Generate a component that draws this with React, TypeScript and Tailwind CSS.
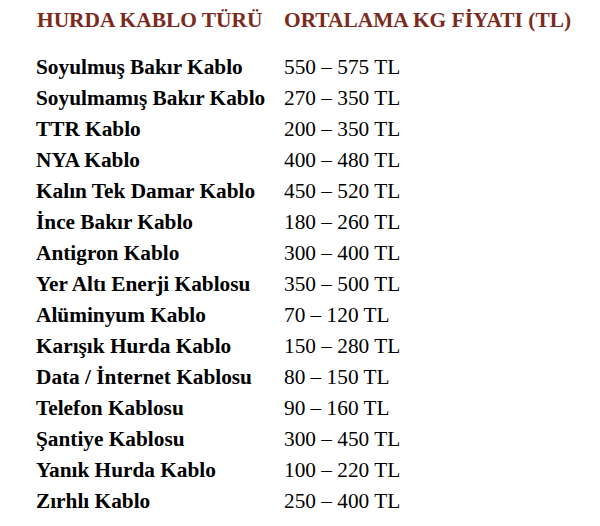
import React from "react";

const rows: [string, string][] = [
  ["Soyulmuş Bakır Kablo", "550 – 575 TL"],
  ["Soyulmamış Bakır Kablo", "270 – 350 TL"],
  ["TTR Kablo", "200 – 350 TL"],
  ["NYA Kablo", "400 – 480 TL"],
  ["Kalın Tek Damar Kablo", "450 – 520 TL"],
  ["İnce Bakır Kablo", "180 – 260 TL"],
  ["Antigron Kablo", "300 – 400 TL"],
  ["Yer Altı Enerji Kablosu", "350 – 500 TL"],
  ["Alüminyum Kablo", "70 – 120 TL"],
  ["Karışık Hurda Kablo", "150 – 280 TL"],
  ["Data / İnternet Kablosu", "80 – 150 TL"],
  ["Telefon Kablosu", "90 – 160 TL"],
  ["Şantiye Kablosu", "300 – 450 TL"],
  ["Yanık Hurda Kablo", "100 – 220 TL"],
  ["Zırhlı Kablo", "250 – 400 TL"],
];

export default function App() {
  return (
    <div
      className="w-[600px] h-[526px] bg-white text-black overflow-hidden pt-[5px]"
      style={{ fontFamily: '"Liberation Serif", "Times New Roman", serif' }}
    >
      <div className="grid grid-cols-[247px_1fr] pl-[37px] text-[21.4px] leading-[31px] font-bold text-[#7b2a1c] mb-[15.5px]">
        <div className="whitespace-nowrap">HURDA KABLO TÜRÜ</div>
        <div className="whitespace-nowrap">ORTALAMA KG FİYATI (TL)</div>
      </div>
      <div className="grid grid-cols-[248px_1fr] pl-[36px] text-[21.3px] leading-[31.05px]">
        {rows.map(([name, price]) => (
          <React.Fragment key={name}>
            <div className="font-bold whitespace-nowrap">{name}</div>
            <div className="whitespace-nowrap">{price}</div>
          </React.Fragment>
        ))}
      </div>
    </div>
  );
}
